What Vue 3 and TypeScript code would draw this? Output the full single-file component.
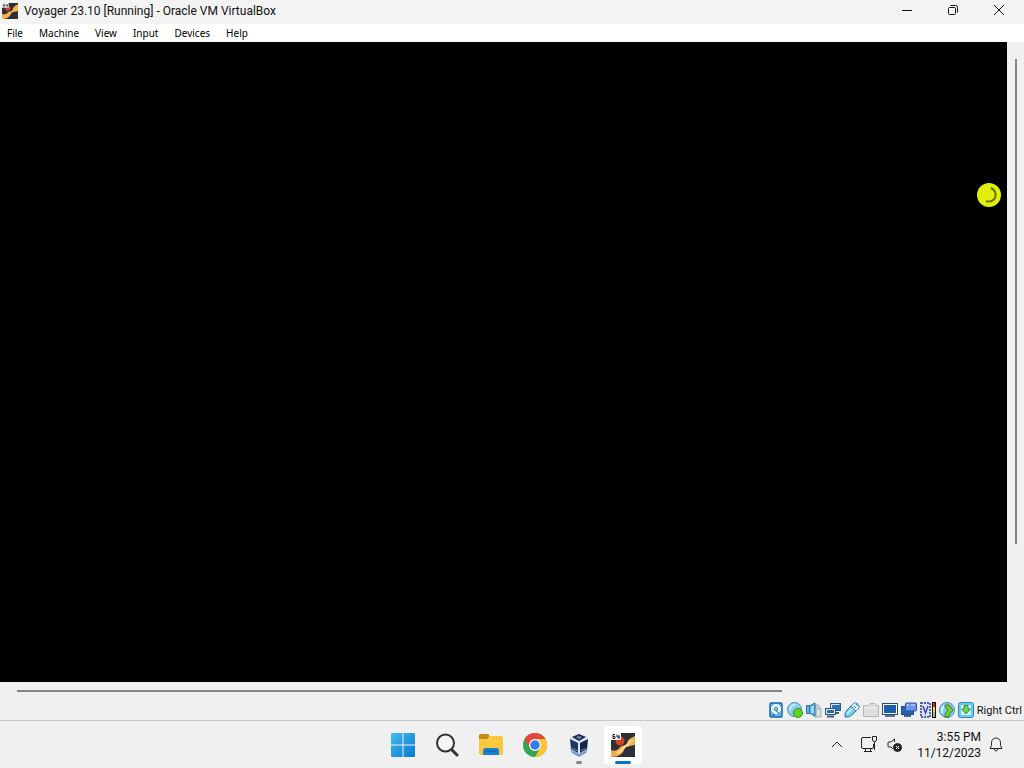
<script setup lang="ts">
const menus: string[] = ['File', 'Machine', 'View', 'Input', 'Devices', 'Help']
</script>

<template>
  <div class="screen">
    <header class="titlebar">
      <svg class="app-icon" viewBox="0 0 24 24" aria-hidden="true">
        <rect width="24" height="24" fill="#2c2f38" />
        <path d="M24 2V12C20 13 16 13 14 15C12 21 7 24 0 24V16C4 18 7 17 9 14C12 12 15 13 16 10C17 5 20 4 24 2Z" fill="#f9b04e" />
        <circle cx="9" cy="8" r="4" fill="#d8421c" />
        <rect width="10" height="7" fill="#f5f5f5" />
        <path d="M4 2H2V5H4V3.500H2M6 1.500V4H9M8 2V6" stroke="#333" fill="none" />
      </svg>
      <h1>Voyager 23.10 [Running] - Oracle VM VirtualBox</h1>
      <div class="controls">
        <button aria-label="Minimize"><svg viewBox="0 0 12 12"><path d="M1 6.500H11" /></svg></button>
        <button aria-label="Restore"><svg viewBox="0 0 12 12"><rect x="1.500" y="3.500" width="7" height="7" rx="1" /><path d="M3.500 1.500H8.500Q10.500 1.500 10.500 3.500V8.500" /></svg></button>
        <button aria-label="Close"><svg viewBox="0 0 12 12"><path d="M1 1L11 11M11 1L1 11" /></svg></button>
      </div>
    </header>

    <nav class="menubar" aria-label="Machine menu">
      <button v-for="menu in menus" :key="menu">{{ menu }}</button>
    </nav>

    <main class="workspace">
      <section class="guest" aria-label="Guest display">
        <svg class="busy-pointer" viewBox="0 0 24 24" aria-hidden="true">
          <circle cx="12" cy="12" r="12" fill="#e2ef0a" />
          <path d="M14 5A7.500 7.500 0 0 1 18 15Q15 20 9 18" stroke="#697006" stroke-width="2" fill="none" />
        </svg>
      </section>
      <div class="vscroll"><div class="vthumb"></div></div>
      <div class="hscroll"><div class="hthumb"></div></div>
    </main>

    <footer class="statusbar">
      <svg viewBox="0 0 16 16">
        <rect x="2" y="1" width="12" height="14" rx="1" fill="#65baf0" stroke="#1d67a5" stroke-width="1.500" />
        <circle cx="8" cy="7" r="4.500" fill="#d9f3ff" stroke="#fff" />
        <circle cx="8" cy="7" r="1.500" fill="#fff" stroke="#1d5d98" />
        <path d="M8 8L11 12M4 13H7" stroke="#174e89" />
      </svg>
      <svg viewBox="0 0 16 16">
        <circle cx="7.500" cy="7.500" r="7" fill="#8ccff2" stroke="#3f8fc3" />
        <path d="M3 9A5 5 0 0 1 9 3" stroke="#c6e9fa" stroke-width="2" fill="none" />
        <circle cx="11" cy="11" r="4.500" fill="#66d41e" stroke="#328a29" />
      </svg>
      <svg viewBox="0 0 16 16">
        <path d="M9 3H13V6H15V15H8V12H10V6H9Z" fill="#c4cbd0" stroke="#aab3ba" />
        <path d="M11 9H14M11 11H14M11 13H14" stroke="#eef2f4" />
        <path d="M.5 3.500H3.500V11.500H.5ZM3.500 4L9 1V14L3.500 11Z" fill="#62b8e9" stroke="#276f9e" />
        <path d="M6.500 4V11" stroke="#b2e4fb" stroke-width="2" />
      </svg>
      <svg viewBox="0 0 16 16">
        <rect x="5.500" y="1.500" width="10" height="7" fill="#2f72bc" stroke="#34577e" />
        <path d="M6.500 7V2.500H14.500" stroke="#d8e8f6" fill="none" />
        <path d="M10 11H14" stroke="#34577e" stroke-width="2" />
        <rect x=".5" y="6.500" width="10" height="6" fill="#226bc4" stroke="#34577e" />
        <path d="M1.500 11.500V7.500H9.500V11.500Z" fill="none" stroke="#e7f1fa" />
        <path d="M2 14.500H9" stroke="#34577e" stroke-width="2" />
      </svg>
      <svg viewBox="0 0 16 16">
        <path d="M1 15Q0 11 3 8L7 4L12 9L8 13Q5 16 1 15Z" fill="#72c9ef" stroke="#327ea9" />
        <path d="M3 12L8 7" stroke="#c4edff" stroke-width="2" />
        <path d="M7 4L10 1Q12 0 14 2Q16 4 15 6L12 9Z" fill="#d9f0fa" stroke="#508dac" />
        <path d="M10 4L12 6M12 2L14 4" stroke="#417c9f" />
      </svg>
      <svg viewBox="0 0 16 16">
        <path d="M.5 3.500H6L7 1.500H12L13 3.500H15.500V14.500H.5Z" fill="#dedede" stroke="#b7b7b7" />
        <path d="M2 6H14" stroke="#efefef" />
      </svg>
      <svg viewBox="0 0 16 16">
        <rect x=".5" y="1.500" width="15" height="11" fill="#fff" stroke="#29486d" />
        <rect x="2" y="3" width="12" height="8" fill="#1b5fac" />
        <path d="M3 14H13" stroke="#557591" stroke-width="2" />
      </svg>
      <svg viewBox="0 0 16 16">
        <rect x=".5" y="4.500" width="12" height="8" fill="#2363b2" stroke="#284f83" />
        <path d="M3 14H10" stroke="#446794" stroke-width="2" />
        <rect x="4.500" y="1" width="11" height="8" rx="1" fill="#6c94e6" stroke="#2854ab" />
        <path d="M6 3H8M10 3H14" stroke="#dce9ff" />
      </svg>
      <svg viewBox="0 0 16 16">
        <rect x="1" y="1" width="9" height="14" fill="#dce2ff" stroke="#4f5aba" stroke-width="2" stroke-dasharray="2 1" />
        <path d="M3 4L5.500 11L8 4" fill="none" stroke="#4049a4" stroke-width="1.500" />
        <rect x="12" width="4" height="16" fill="#111" />
        <path d="M14 1V5" stroke="#ef2b18" stroke-width="2" />
        <path d="M14 5V10" stroke="#f5df35" stroke-width="2" />
        <path d="M14 10V15" stroke="#a7ce37" stroke-width="2" />
      </svg>
      <svg viewBox="0 0 16 16">
        <circle cx="8" cy="8" r="7.500" fill="#85cbed" stroke="#448eb9" />
        <path d="M3 11Q2 5 7 3" stroke="#d4f2ff" stroke-width="2" fill="none" />
        <path d="M6 3H10L14 8L10 13V15H6V12L9 8L6 5Z" fill="#75cf2e" stroke="#387d33" />
      </svg>
      <svg viewBox="0 0 16 16">
        <rect x=".5" y=".5" width="15" height="15" rx="2" fill="#6bc7ed" stroke="#278cc0" />
        <rect x="3" y="3" width="10" height="10" rx="1" fill="#d9f5ef" />
        <path d="M6 3.500H10V7H12.500L8 12L3.500 7H6Z" fill="#75d544" stroke="#269248" />
      </svg>
      <span>Right Ctrl</span>
    </footer>

    <div class="taskbar">
      <div class="apps">
        <button aria-label="Start">
          <svg viewBox="0 0 24 24">
            <defs><linearGradient id="win" x1="0" y1="0" x2="1" y2="1"><stop stop-color="#43bdee" /><stop offset="1" stop-color="#0878d0" /></linearGradient></defs>
            <path d="M0 1Q0 0 1 0H11.500V11.500H0ZM12.500 0H23Q24 0 24 1V11.500H12.500ZM0 12.500H11.500V24H1Q0 24 0 23ZM12.500 12.500H24V23Q24 24 23 24H12.500Z" fill="url(#win)" />
          </svg>
        </button>
        <button aria-label="Search">
          <svg viewBox="0 0 24 24"><circle cx="10.500" cy="10" r="8.500" fill="#f4f5f5" stroke="#303234" stroke-width="2" /><path d="M17 17L22 22" stroke="#303234" stroke-width="3" stroke-linecap="round" /></svg>
        </button>
        <button aria-label="File Explorer">
          <svg viewBox="0 0 24 24">
            <path d="M0 3Q0 1 2 1H9L11 3H22Q24 3 24 5V20Q24 22 22 22H2Q0 22 0 20Z" fill="#f9c83f" />
            <path d="M0 6V3Q0 1 2 1H9Q11 2 10 4L8 6Z" fill="#bd8c18" />
            <path d="M4 22V18Q4 15 7 15H17Q20 15 20 18V22Z" fill="#1680d3" />
            <path d="M7 18H17" stroke="#125ba4" />
          </svg>
        </button>
        <button aria-label="Google Chrome">
          <svg viewBox="0 0 24 24">
            <circle cx="12" cy="12" r="12" fill="#34a353" />
            <path d="M1.600 6A12 12 0 0 1 22.400 6H12A6 6 0 0 0 6.800 15Z" fill="#e9453a" />
            <path d="M22.400 6A12 12 0 0 1 12 24L17.200 15A6 6 0 0 0 12 6Z" fill="#fdc62f" />
            <circle cx="12" cy="12" r="6" fill="#fff" /><circle cx="12" cy="12" r="4.700" fill="#367ce8" />
          </svg>
        </button>
        <button class="running" aria-label="VirtualBox Manager">
          <svg viewBox="0 0 24 24">
            <path d="M3 16L12 20L21 16L19 20L12 24L5 20Z" fill="#7c98c5" />
            <path d="M3 4L12 1L21 4L20 17L12 21L4 17Z" fill="#dbe3ed" />
            <path d="M5 4L12 1L19 4L12 8Z" fill="#1c2d51" />
            <path d="M3 6L11 10V20L4 16Z" fill="#193769" /><path d="M21 6L13 10V20L20 16Z" fill="#142446" />
            <path d="M9 4L12 3L15 4L12 6Z" fill="#7890b4" />
            <path d="M5 15L11 18M19 15L13 18" stroke="#6683b4" />
          </svg>
        </button>
        <button class="running active" aria-label="Voyager virtual machine">
          <svg viewBox="0 0 24 24">
            <rect width="24" height="24" fill="#2c2f38" />
            <path d="M24 3V12C20 13 16 13 14 15C12 21 8 24 0 24V17C4 19 7 17 9 14C12 12 15 13 16 10C17 6 20 5 24 3Z" fill="#f3ad4f" />
            <path d="M22 8Q19 8 17 12L13 14Q11 18 6 20" stroke="#ffdd94" stroke-width="2" fill="none" />
            <circle cx="9" cy="8" r="4.500" fill="#d8421c" />
            <rect width="10" height="7" fill="#fff" />
            <path d="M4 1.500H2V5.500H4V3.500H2M6 1.500V4H9M8 2V6" stroke="#222" fill="none" />
          </svg>
        </button>
      </div>
      <div class="tray">
        <button class="chevron" aria-label="Show hidden icons"><svg viewBox="0 0 18 18"><path d="M4 11L9 6L14 11" /></svg></button>
        <button class="network" aria-label="Network"><svg viewBox="0 0 18 18"><path d="M11 1.500H3Q1.500 1.500 1.500 3V11Q1.500 12.500 3 12.500H12Q13.500 12.500 13.500 11V8M5.500 13V15.500M10.500 13V15.500M4 15.500H12" /><path d="M12.500 .5H16.500V4Q16.500 5.500 14.500 5.500Q12.500 5.500 12.500 4ZM14.500 6V14" /></svg></button>
        <button class="sound" aria-label="Volume muted"><svg viewBox="0 0 18 18"><path d="M7 13L5 11H3Q2 11 2 10V7Q2 6 3 6H5L8.500 3V6" /><circle cx="11.500" cy="11.500" r="4" fill="#222" /><path d="M10 10L13 13M13 10L10 13" class="mute-cross" /></svg></button>
        <time datetime="2023-11-12T15:55"><span>3:55 PM</span><span>11/12/2023</span></time>
        <button class="bell" aria-label="Notifications"><svg viewBox="0 0 18 18"><path d="M3 12.500H15L13.500 9.500V6.500A4.500 4.500 0 0 0 4.500 6.500V9.500ZM7 13Q9 17 11 13" /></svg></button>
      </div>
    </div>
  </div>
</template>

<style>
body { margin: 0; }
</style>

<style scoped>
.screen {
  height: 100vh;
  display: flex;
  flex-direction: column;
  overflow: hidden;
  background: #f0f0f0;
  color: #111;
  font-family: Roboto, "Noto Sans", sans-serif;
  font-size: 12px;
}
button {
  padding: 0;
  border: 0;
  background: none;
  color: inherit;
  font: inherit;
}
svg { display: block; flex: none; }
.titlebar {
  height: 24px;
  flex: none;
  display: flex;
  align-items: center;
  box-sizing: border-box;
  padding: 0 2px 2px;
  background: #f3f3f3;
}
.app-icon { width: 16px; height: 16px; margin-right: 6px; }
h1 { margin: 0; flex: 1; font-size: 12px; font-weight: 400; white-space: nowrap; }
.controls { display: flex; align-self: stretch; }
.controls button { width: 46px; display: grid; place-items: center; padding-bottom: 2px; }
.controls svg { width: 12px; height: 12px; fill: none; stroke: #111; }
.menubar {
  height: 18px;
  flex: none;
  display: flex;
  align-items: center;
  gap: 16px;
  padding-left: 7px;
  background: #fff;
  color: #000;
  font-family: "Noto Sans", "Open Sans", sans-serif;
  font-size: 10px;
}
.workspace {
  flex: 1;
  min-height: 0;
  display: grid;
  grid-template-columns: 1fr 17px;
  grid-template-rows: 1fr 18px;
}
.guest { position: relative; background: #000; }
.busy-pointer { position: absolute; top: 141px; right: 6px; width: 24px; height: 24px; }
.vscroll { padding: 17px 0 17px 8px; }
.vthumb { width: 2px; height: 80%; background: #858585; }
.hscroll { padding: 8px 17px 0; }
.hthumb { width: 78.6%; height: 2px; background: #858585; }
.statusbar {
  height: 20px;
  flex: none;
  display: flex;
  align-items: center;
  justify-content: flex-end;
  gap: 3px;
  padding-right: 2px;
  font-size: 11px;
}
.statusbar svg { width: 16px; height: 16px; }
.statusbar span { white-space: nowrap; }
.taskbar {
  height: 47px;
  flex: none;
  display: grid;
  grid-template-columns: 1fr auto 1fr;
  align-items: center;
  border-top: 1px solid #c9c9c9;
  background: #f0f0f0;
}
.apps { grid-column: 2; display: flex; gap: 6px; padding-left: 2px; }
.apps button { position: relative; width: 38px; height: 38px; display: grid; place-items: center; border-radius: 4px; }
.apps svg { width: 24px; height: 24px; }
.active { background: #fff; }
.running::after { content: ""; position: absolute; bottom: 0; left: 16px; width: 6px; height: 3px; border-radius: 2px; background: #858585; }
.running.active::after { left: 11px; width: 16px; background: #0874c4; }
.tray { display: flex; align-items: center; justify-content: flex-end; padding-right: 19px; }
.tray svg { width: 18px; height: 18px; fill: none; stroke: #222; }
.tray .mute-cross { stroke: #fff; }
.chevron { margin-right: 14px; }
.network { margin-right: 8px; }
.sound { margin-right: 13px; }
time { display: flex; flex-direction: column; align-items: flex-end; line-height: 16px; }
.bell { margin-left: 6px; }
</style>
